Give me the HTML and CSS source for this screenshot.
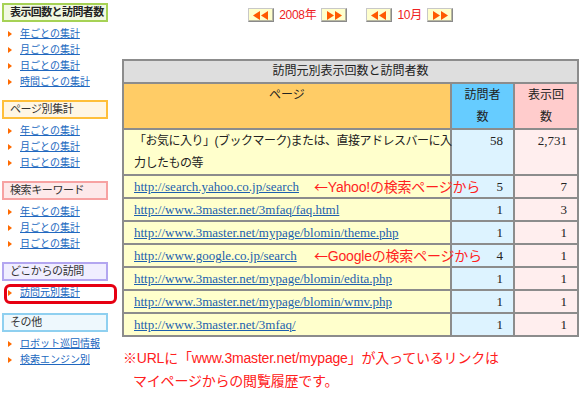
FILE: index.html
```html
<!DOCTYPE html>
<html lang="ja">
<head>
<meta charset="utf-8">
<title>訪問元別表示回数と訪問者数</title>
<link rel="stylesheet" href="styles.css">
</head>
<body>
<div class="page">
  <aside class="sidebar">
    <section class="sec">
      <h2 class="sec-title t-green strong">表示回数と訪問者数</h2>
      <ul class="links">
        <li><a href="#">年ごとの集計</a></li>
        <li><a href="#">月ごとの集計</a></li>
        <li><a href="#">日ごとの集計</a></li>
        <li><a href="#">時間ごとの集計</a></li>
      </ul>
    </section>
    <section class="sec">
      <h2 class="sec-title t-orange">ページ別集計</h2>
      <ul class="links">
        <li><a href="#">年ごとの集計</a></li>
        <li><a href="#">月ごとの集計</a></li>
        <li><a href="#">日ごとの集計</a></li>
      </ul>
    </section>
    <section class="sec">
      <h2 class="sec-title t-pink">検索キーワード</h2>
      <ul class="links">
        <li><a href="#">年ごとの集計</a></li>
        <li><a href="#">月ごとの集計</a></li>
        <li><a href="#">日ごとの集計</a></li>
      </ul>
    </section>
    <section class="sec">
      <h2 class="sec-title t-purple">どこからの訪問</h2>
      <ul class="links links-current">
        <li class="current"><a href="#">訪問元別集計</a></li>
      </ul>
    </section>
    <section class="sec">
      <h2 class="sec-title t-blue">その他</h2>
      <ul class="links">
        <li><a href="#">ロボット巡回情報</a></li>
        <li><a href="#">検索エンジン別</a></li>
      </ul>
    </section>
  </aside>

  <main class="main">
    <nav class="datenav">
      <div class="navgroup">
        <a class="navbtn" href="#"><svg width="16" height="9" viewBox="0 0 16 9"><polygon points="0,4.5 7,0 7,9" fill="#ff5a00"/><polygon points="8,4.5 15,0 15,9" fill="#ff5a00"/></svg></a>
        <span class="navlabel">2008年</span>
        <a class="navbtn" href="#"><svg width="16" height="9" viewBox="0 0 16 9"><polygon points="1,0 8,4.5 1,9" fill="#ff5a00"/><polygon points="9,0 16,4.5 9,9" fill="#ff5a00"/></svg></a>
      </div>
      <div class="navgroup">
        <a class="navbtn" href="#"><svg width="16" height="9" viewBox="0 0 16 9"><polygon points="0,4.5 7,0 7,9" fill="#ff5a00"/><polygon points="8,4.5 15,0 15,9" fill="#ff5a00"/></svg></a>
        <span class="navlabel">10月</span>
        <a class="navbtn" href="#"><svg width="16" height="9" viewBox="0 0 16 9"><polygon points="1,0 8,4.5 1,9" fill="#ff5a00"/><polygon points="9,0 16,4.5 9,9" fill="#ff5a00"/></svg></a>
      </div>
    </nav>

    <table class="stats">
      <colgroup>
        <col class="c-page">
        <col class="c-vis">
        <col class="c-view">
      </colgroup>
      <tr>
        <th class="title" colspan="3">訪問元別表示回数と訪問者数</th>
      </tr>
      <tr class="head">
        <th class="h-page">ページ</th>
        <th class="h-vis">訪問者<br>数</th>
        <th class="h-view">表示回<br>数</th>
      </tr>
      <tr>
        <td class="page-cell jp">「お気に入り」(ブックマーク)または、直接アドレスバーに入<br>力したもの等</td>
        <td class="num vis">58</td>
        <td class="num view">2,731</td>
      </tr>
      <tr>
        <td class="page-cell"><a href="#">http://search.yahoo.co.jp/search</a><span class="annot"><span class="arrow">←</span>Yahoo!の検索ページから</span></td>
        <td class="num vis">5</td>
        <td class="num view">7</td>
      </tr>
      <tr>
        <td class="page-cell"><a href="#">http://www.3master.net/3mfaq/faq.html</a></td>
        <td class="num vis">1</td>
        <td class="num view">3</td>
      </tr>
      <tr>
        <td class="page-cell"><a href="#">http://www.3master.net/mypage/blomin/theme.php</a></td>
        <td class="num vis">1</td>
        <td class="num view">1</td>
      </tr>
      <tr>
        <td class="page-cell"><a href="#">http://www.google.co.jp/search</a><span class="annot"><span class="arrow">←</span>Googleの検索ページから</span></td>
        <td class="num vis">4</td>
        <td class="num view">1</td>
      </tr>
      <tr>
        <td class="page-cell"><a href="#">http://www.3master.net/mypage/blomin/edita.php</a></td>
        <td class="num vis">1</td>
        <td class="num view">1</td>
      </tr>
      <tr>
        <td class="page-cell"><a href="#">http://www.3master.net/mypage/blomin/wmv.php</a></td>
        <td class="num vis">1</td>
        <td class="num view">1</td>
      </tr>
      <tr>
        <td class="page-cell"><a href="#">http://www.3master.net/3mfaq/</a></td>
        <td class="num vis">1</td>
        <td class="num view">1</td>
      </tr>
    </table>

    <p class="note">※URLに「www.3master.net/mypage」が入っているリンクは<br><span class="note-indent">マイページからの閲覧履歴です。</span></p>
  </main>
</div>
</body>
</html>
```

FILE: styles.css
```css
html, body {
  margin: 0;
  padding: 0;
  background: #ffffff;
}

body {
  font-family: "Liberation Sans", "Noto Sans CJK JP", sans-serif;
  color: #222222;
}

.page {
  display: flex;
  align-items: flex-start;
  width: 580px;
}

/* ---------- sidebar ---------- */
.sidebar {
  width: 120px;
  flex: none;
  box-sizing: border-box;
  padding: 3px 0 0 2px;
}

.sec-title {
  margin: 0;
  width: 106px;
  height: 19px;
  box-sizing: border-box;
  border: 2px solid;
  padding-left: 6px;
  font-size: 11px;
  line-height: 15px;
  font-weight: normal;
  letter-spacing: -0.4px;
  color: #333333;
  white-space: nowrap;
}

.sec-title.strong {
  font-weight: bold;
  color: #222222;
  letter-spacing: -0.6px;
}

.t-green  { border-color: #a6d255; background: #f1f8e2; }
.t-orange { border-color: #ffbf3a; background: #fff6e4; }
.t-pink   { border-color: #f7a2a2; background: #fde9ea; }
.t-purple { border-color: #b3a6f0; background: #f0eeff; }
.t-blue   { border-color: #8fd0f0; background: #eef8fd; }

.links {
  list-style: none;
  margin: 4px 0 10px;
  padding: 0;
}

.links-current {
  margin-bottom: 12px;
}

.links li {
  position: relative;
  height: 16px;
  line-height: 16px;
  padding-left: 18px;
  font-size: 10px;
  white-space: nowrap;
}

.links li::before {
  content: "";
  position: absolute;
  left: 6px;
  top: 5px;
  width: 0;
  height: 0;
  border-left: 4px solid #ff6a00;
  border-top: 3px solid transparent;
  border-bottom: 3px solid transparent;
}

.links li.current::after {
  content: "";
  position: absolute;
  left: 2px;
  top: -1px;
  width: 113px;
  height: 20px;
  box-sizing: border-box;
  border: 3px solid #e60012;
  border-radius: 6px;
}

.links a {
  color: #2168c0;
  text-decoration: underline;
}

/* ---------- main ---------- */
.main {
  flex: 1;
  box-sizing: border-box;
  padding: 0 3px 0 2px;
}

.datenav {
  display: flex;
  justify-content: center;
  gap: 19px;
  margin-top: 8px;
  height: 14px;
}

.navgroup {
  display: flex;
  align-items: center;
  gap: 5px;
}

.navbtn {
  display: flex;
  align-items: center;
  justify-content: center;
  width: 26px;
  height: 14px;
  box-sizing: border-box;
  background: #ffffcc;
  border: 1px solid;
  border-color: #c8c8c8 #8a8a8a #8a8a8a #c8c8c8;
  box-shadow: inset -1px -1px 0 #b8b8a0;
}

.navlabel {
  font-size: 12px;
  line-height: 14px;
  color: #ee2222;
  white-space: nowrap;
  letter-spacing: -0.3px;
}

/* ---------- table ---------- */
.stats {
  margin-top: 37px;
  width: 455px;
  border-collapse: collapse;
  table-layout: fixed;
  border: 2px solid #8c8c8c;
}

.c-page { width: 328px; }
.c-vis  { width: 63px; }
.c-view { width: 64px; }

.stats th,
.stats td {
  border: 2px solid #8c8c8c;
  padding: 0 10px;
  height: 21px;
  line-height: 21px;
  vertical-align: top;
  font-size: 12px;
  font-weight: normal;
  color: #222222;
}

.stats th.title {
  background: #dedede;
  text-align: center;
}

.head th {
  text-align: center;
  line-height: 22px;
  padding: 0;
}

.h-page { background: #ffcc66; }
.h-vis  { background: #66ccff; }
.h-view { background: #ffcccc; }

.page-cell {
  position: relative;
  background: #ffffcc;
  white-space: nowrap;
  font-family: "Liberation Serif", serif;
  font-size: 13px !important;
}

.page-cell.jp {
  font-family: "Liberation Sans", "Noto Sans CJK JP", sans-serif;
  font-size: 12px !important;
  letter-spacing: -0.5px;
  line-height: 22px;
}

.page-cell a {
  color: #1d5fae;
  text-decoration: underline;
}

.num {
  text-align: right;
  font-family: "Liberation Serif", serif;
  font-size: 13px !important;
}

.vis  { background: #ddf3ff; }
.view { background: #ffeeee; }

.annot {
  position: absolute;
  left: 190px;
  top: 0;
  line-height: 21px;
  font-family: "Liberation Sans", "Noto Sans CJK JP", sans-serif;
  font-size: 14px;
  color: #ff1f1f;
  white-space: nowrap;
  letter-spacing: -0.2px;
}

.arrow {
  font-family: "Noto Sans CJK JP", sans-serif;
}

.note {
  margin: 10px 0 0 1px;
  font-size: 14px;
  line-height: 23px;
  color: #ff2020;
  white-space: nowrap;
  letter-spacing: -0.2px;
}

.note-indent {
  padding-left: 10px;
}
```
